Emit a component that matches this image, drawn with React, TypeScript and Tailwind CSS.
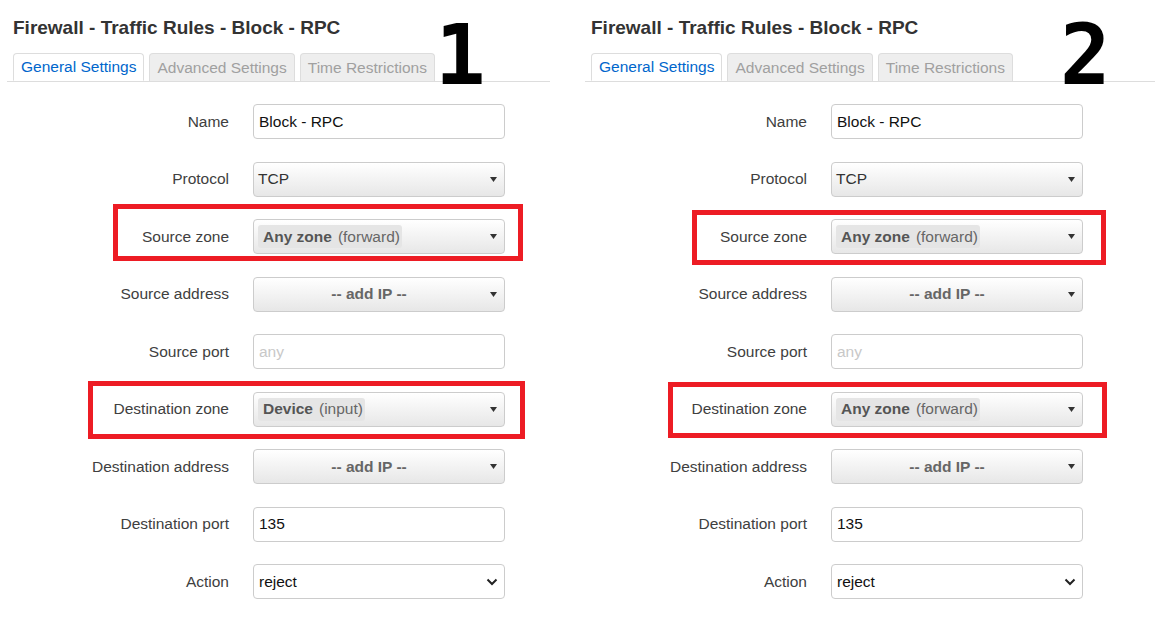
import React from 'react';

type Row = {
  label: string;
  kind: 'text' | 'placeholder' | 'select' | 'zone' | 'addip' | 'native';
  value?: string;
  zone?: string;
  dir?: string;
};

type Box = { left: number; top: number; width: number; height: number };

function Arrow() {
  return (
    <svg width="7" height="5" viewBox="0 0 7 5" className="shrink-0">
      <polygon points="0,0 7,0 3.5,5" fill="#333" />
    </svg>
  );
}

function Field({ row }: { row: Row }) {
  const base = 'w-[252px] h-[35px] border border-[#ccc] rounded-[4px] flex items-center';

  if (row.kind === 'text' || row.kind === 'placeholder') {
    return (
      <div className={`${base} bg-white pl-[5px]`}>
        <span className={row.kind === 'placeholder' ? 'text-[#c8c8c8]' : 'text-[#111]'}>{row.value}</span>
      </div>
    );
  }

  if (row.kind === 'native') {
    return (
      <div className={`${base} bg-white pl-[5px] pr-[6px] justify-between`}>
        <span className="text-[#111]">{row.value}</span>
        <svg width="12" height="8" viewBox="0 0 12 8">
          <path d="M1.5 1.5 L6 6 L10.5 1.5" fill="none" stroke="#222" strokeWidth="2" />
        </svg>
      </div>
    );
  }

  // gradient "dropdown" selects
  return (
    <div className={`${base} bg-gradient-to-b from-white to-[#e7e7e7] pl-[4px] pr-[7px] justify-between`}>
      {row.kind === 'select' && <span className="text-[#333]">{row.value}</span>}
      {row.kind === 'zone' && (
        <span className="h-[23px] flex items-center gap-[6px] bg-[#e5e5e5] rounded-[3px] pl-[5px] pr-[2px]">
          <b className="text-[#555]">{row.zone}</b>
          <span className="text-[#666]">{row.dir}</span>
        </span>
      )}
      {row.kind === 'addip' && (
        <span className="flex-1 text-center font-bold text-[#666] pr-[10px]">-- add IP --</span>
      )}
      <Arrow />
    </div>
  );
}

function Panel({
  num,
  numLeft,
  destZone,
  destDir,
  lineWidth,
  boxes,
}: {
  num: string;
  numLeft: number;
  destZone: string;
  destDir: string;
  lineWidth: string;
  boxes: Box[];
}) {
  const rows: Row[] = [
    { label: 'Name', kind: 'text', value: 'Block - RPC' },
    { label: 'Protocol', kind: 'select', value: 'TCP' },
    { label: 'Source zone', kind: 'zone', zone: 'Any zone', dir: '(forward)' },
    { label: 'Source address', kind: 'addip' },
    { label: 'Source port', kind: 'placeholder', value: 'any' },
    { label: 'Destination zone', kind: 'zone', zone: destZone, dir: destDir },
    { label: 'Destination address', kind: 'addip' },
    { label: 'Destination port', kind: 'text', value: '135' },
    { label: 'Action', kind: 'native', value: 'reject' },
  ];

  return (
    <div className="relative w-[578px] h-[621px] shrink-0">
      <h1 className="pt-[16px] pl-[13px] text-[19px] leading-[23px] font-bold text-[#333]">
        Firewall - Traffic Rules - Block - RPC
      </h1>

      {/* Tabs */}
      <div className={`mt-[14px] ml-[7px] ${lineWidth} pl-[6px] flex gap-[5px] border-b border-[#ddd]`}>
        <div className="h-[28px] -mb-px px-[7px] flex items-center bg-white border border-[#ddd] border-b-white rounded-t-[4px] text-[#0066cc]">
          General Settings
        </div>
        <div className="h-[28px] px-[7px] flex items-center bg-[#eee] border border-[#ddd] border-b-0 rounded-t-[4px] text-[#a0a0a0]">
          Advanced Settings
        </div>
        <div className="h-[28px] px-[7px] flex items-center bg-[#eee] border border-[#ddd] border-b-0 rounded-t-[4px] text-[#a0a0a0]">
          Time Restrictions
        </div>
      </div>

      {/* Form */}
      <div className="pt-[22px] flex flex-col gap-[22.5px]">
        {rows.map((r) => (
          <div key={r.label} className="flex items-center h-[35px]">
            <div className="w-[229px] text-right text-[#404040]">{r.label}</div>
            <div className="ml-[24px]">
              <Field row={r} />
            </div>
          </div>
        ))}
      </div>

      {/* annotations */}
      <div
        className="absolute top-[13px] text-[84px] leading-none font-bold text-black"
        style={{ left: numLeft, fontFamily: '"DejaVu Sans Mono", monospace' }}
      >
        {num}
      </div>
      {boxes.map((b, i) => (
        <div
          key={i}
          className="absolute border-[5px] border-[#ed1c24]"
          style={{ left: b.left, top: b.top, width: b.width, height: b.height }}
        />
      ))}
    </div>
  );
}

export default function App() {
  return (
    <div className="w-[1174px] h-[621px] bg-white flex text-[15.5px] font-['Liberation_Sans',Arial,sans-serif] overflow-hidden">
      <Panel
        num="1"
        numLeft={435}
        destZone="Device"
        destDir="(input)"
        lineWidth="w-[543px]"
        boxes={[
          { left: 113, top: 204, width: 410, height: 57 },
          { left: 88, top: 381, width: 437, height: 58 },
        ]}
      />
      <Panel
        num="2"
        numLeft={482}
        destZone="Any zone"
        destDir="(forward)"
        lineWidth="w-[570px]"
        boxes={[
          { left: 114, top: 210, width: 414, height: 55 },
          { left: 90, top: 382, width: 439, height: 56 },
        ]}
      />
    </div>
  );
}
